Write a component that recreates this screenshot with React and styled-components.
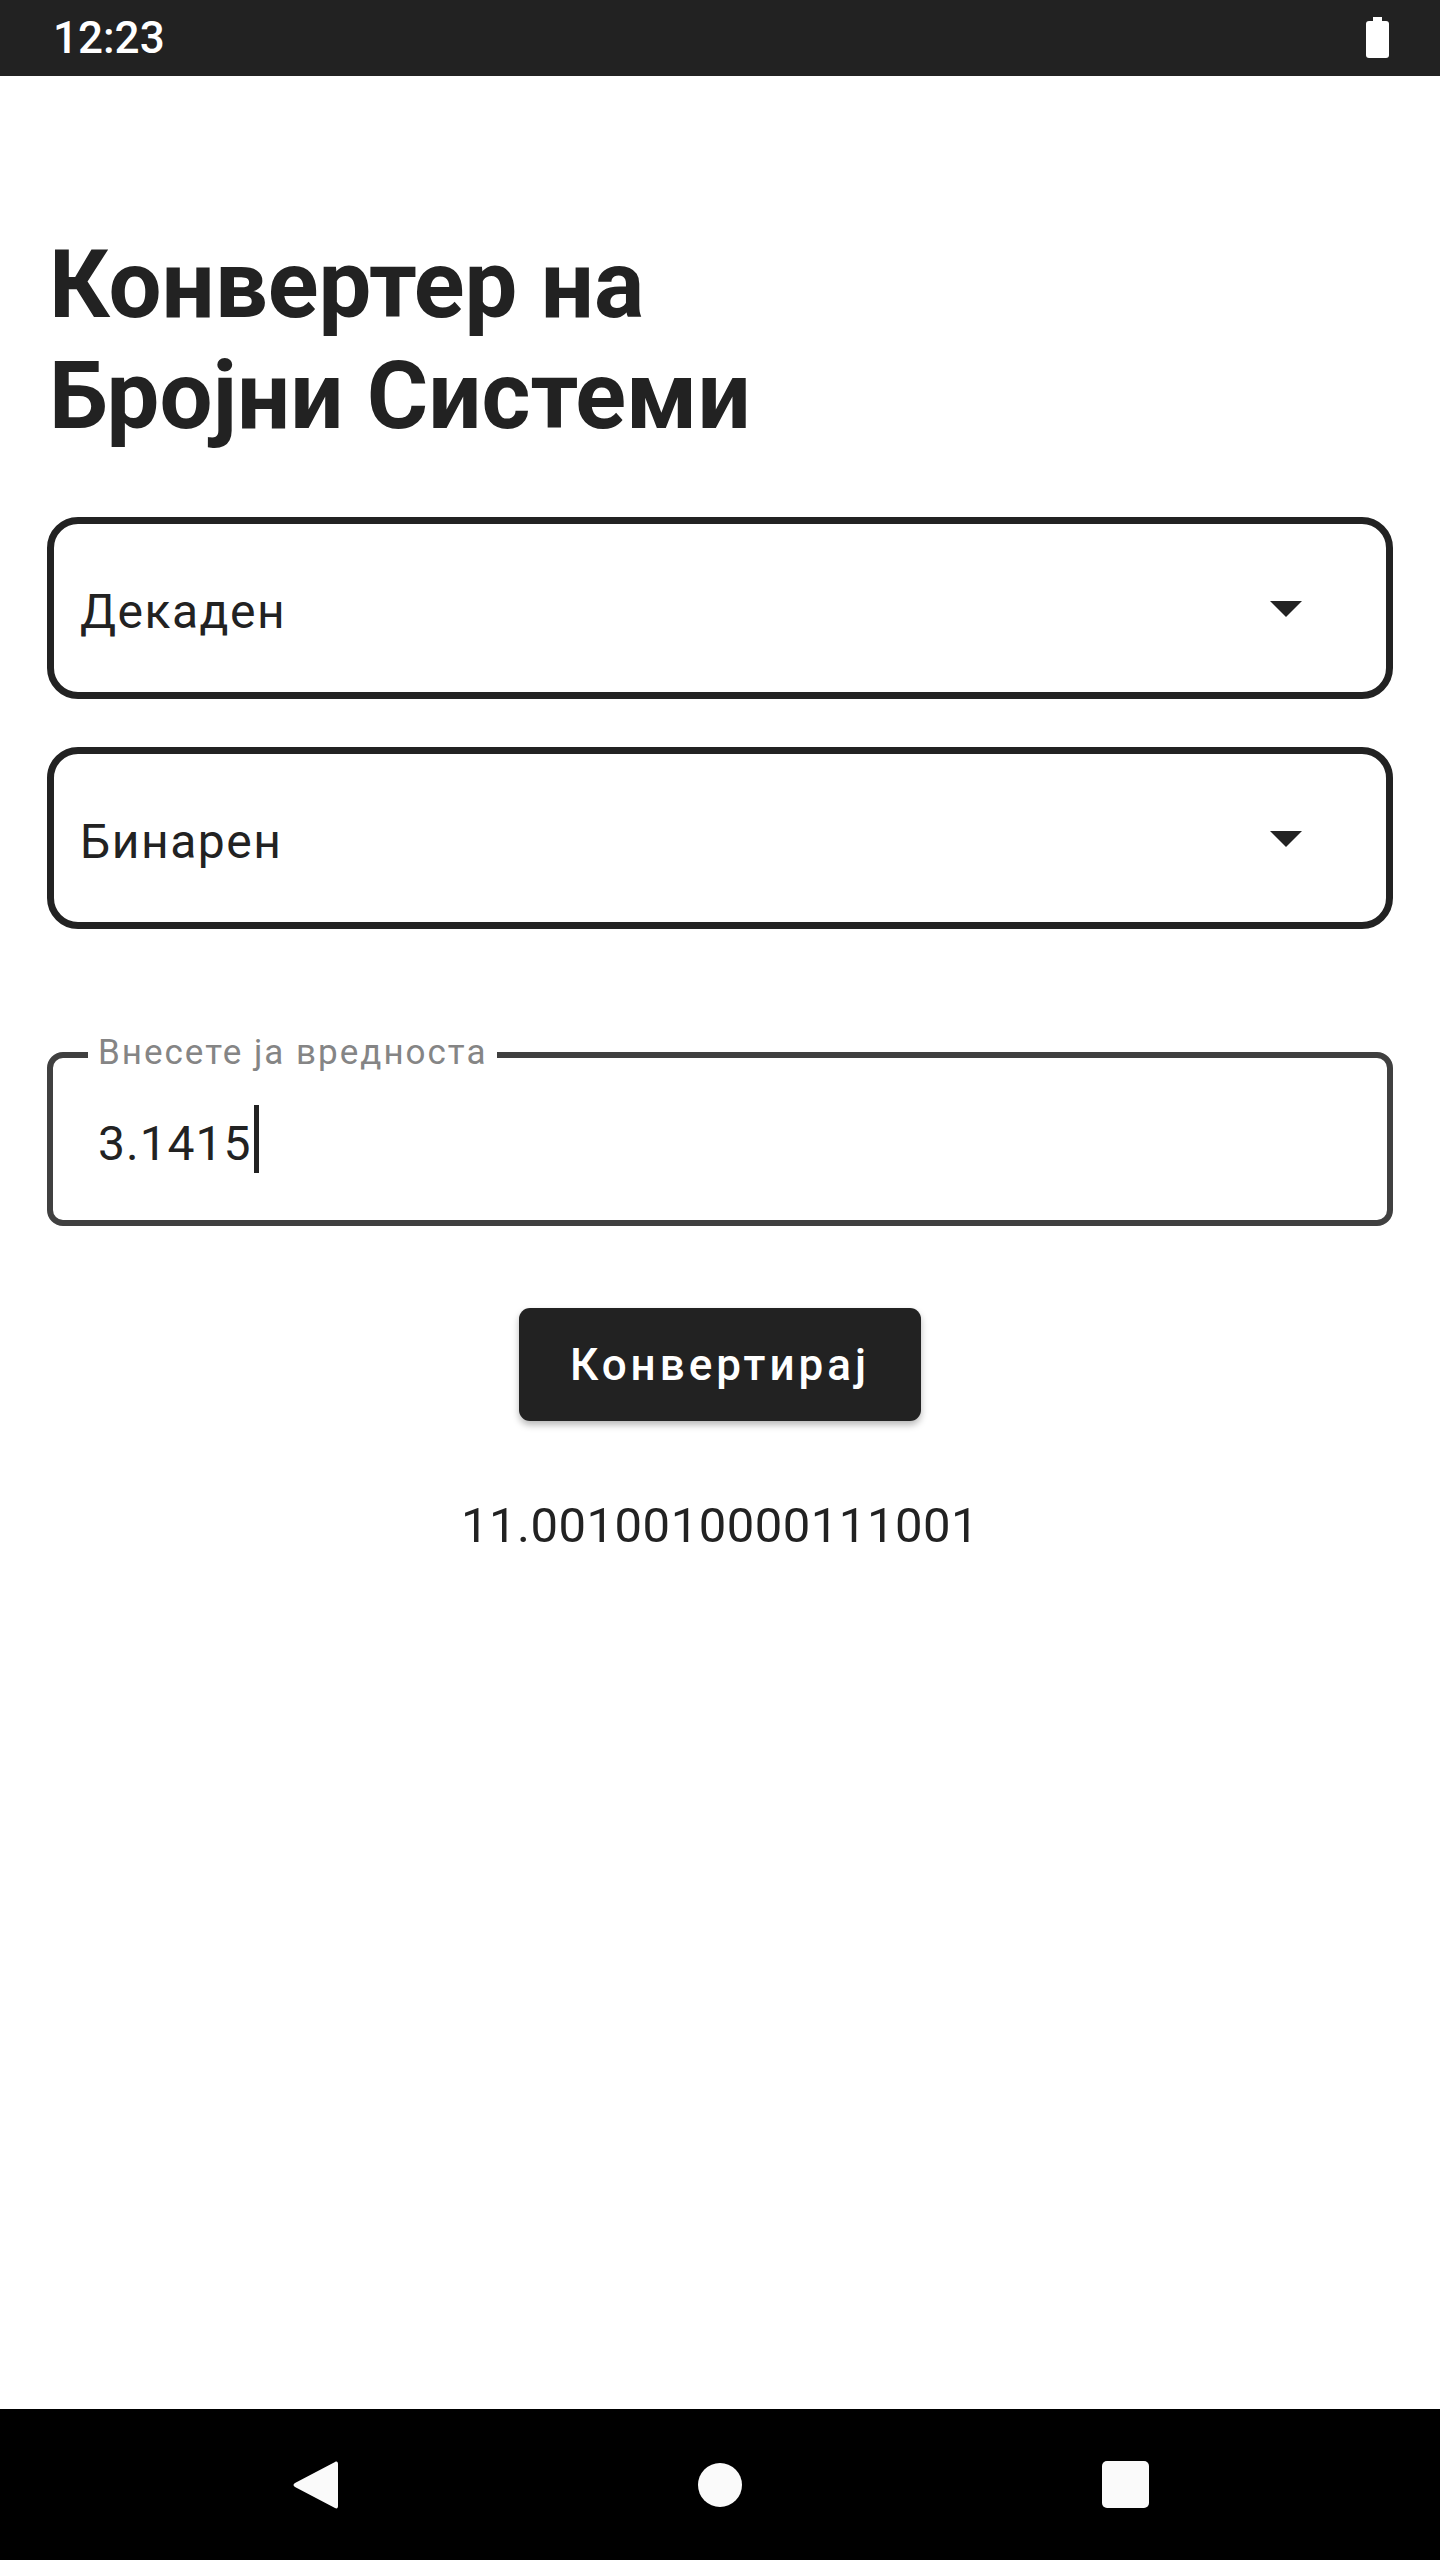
import React from 'react';
import styled, { createGlobalStyle } from 'styled-components';

const INK = '#222222';

const GlobalStyle = createGlobalStyle`
  html, body {
    margin: 0;
    padding: 0;
    background: #ffffff;
  }
  body {
    font-family: Roboto, "Noto Sans", "Liberation Sans", sans-serif;
    color: ${INK};
  }
`;

const Screen = styled.div`
  display: flex;
  flex-direction: column;
  width: 1440px;
  height: 2560px;
  background: #ffffff;
`;

const StatusBar = styled.div`
  display: flex;
  align-items: center;
  justify-content: space-between;
  height: 76px;
  padding: 0 51px 0 53px;
  background: ${INK};
  color: #ffffff;
`;

const Clock = styled.span`
  font-size: 44px;
  font-weight: 500;
  line-height: 1;
`;

const Battery = styled.div`
  position: relative;
  width: 23px;
  height: 37px;
  margin-top: 3px;
  border-radius: 3px;
  background: #ffffff;

  &::before {
    content: '';
    position: absolute;
    top: -4px;
    left: 7px;
    width: 9px;
    height: 5px;
    background: #ffffff;
  }
`;

const Main = styled.main`
  flex: 1;
  display: flex;
  flex-direction: column;
  padding: 154px 47px 0;
`;

const Title = styled.h1`
  margin: 0 0 65px 2px;
  font-size: 94px;
  font-weight: 700;
  line-height: 111px;
  color: ${INK};
`;

const Select = styled.div`
  display: flex;
  align-items: center;
  justify-content: space-between;
  box-sizing: border-box;
  height: 182px;
  padding: 8px 84px 0 26px;
  margin-bottom: ${({ $gap }) => $gap}px;
  border: 7px solid ${INK};
  border-radius: 31px;
`;

const SelectText = styled.span`
  font-size: 48px;
  line-height: 56px;
  letter-spacing: 1.5px;
  color: ${INK};
`;

const Caret = styled.span`
  width: 0;
  height: 0;
  margin-top: -6px;
  border-left: 16px solid transparent;
  border-right: 16px solid transparent;
  border-top: 16px solid ${INK};
`;

const Field = styled.div`
  position: relative;
  box-sizing: border-box;
  height: 174px;
  padding: 57px 45px 0;
  margin-top: 123px;
  border: 6px solid #404040;
  border-radius: 16px;
`;

const FieldLabel = styled.span`
  position: absolute;
  top: -24px;
  left: 35px;
  padding: 0 10px;
  background: #ffffff;
  font-size: 35px;
  line-height: 38px;
  letter-spacing: 2px;
  color: #858585;
`;

const FieldValue = styled.div`
  display: flex;
  align-items: center;
  font-size: 48px;
  line-height: 56px;
  letter-spacing: 1px;
  color: ${INK};
`;

const Cursor = styled.span`
  width: 5px;
  height: 68px;
  margin: -10px 0 0 2px;
  background: ${INK};
`;

const ConvertButton = styled.button`
  align-self: center;
  width: 402px;
  height: 113px;
  margin-top: 82px;
  padding: 0;
  border: none;
  border-radius: 11px;
  background: ${INK};
  color: #ffffff;
  font-family: Roboto, "Noto Sans", sans-serif;
  font-size: 44px;
  font-weight: 500;
  letter-spacing: 4px;
  box-shadow: 0 4px 7px rgba(0, 0, 0, 0.28);
`;

const Result = styled.div`
  margin-top: 77px;
  text-align: center;
  font-size: 49px;
  line-height: 56px;
  letter-spacing: 0.5px;
  color: ${INK};
`;

const NavBar = styled.nav`
  display: flex;
  align-items: center;
  justify-content: center;
  gap: 305px;
  height: 151px;
  background: #000000;
`;

const NavSlot = styled.div`
  display: flex;
  align-items: center;
  justify-content: center;
  width: 100px;
  height: 60px;
`;

const HomeDot = styled.div`
  width: 44px;
  height: 44px;
  border-radius: 50%;
  background: #fafafa;
`;

const RecentsSquare = styled.div`
  width: 47px;
  height: 47px;
  border-radius: 5px;
  background: #fafafa;
`;

const BackIcon = () => (
  <svg width="48" height="52" viewBox="0 0 48 52">
    <path
      d="M44 3 C46 2 47 3 47 5 L47 47 C47 49 46 50 44 49 L4 28 C2 27 2 25 4 24 Z"
      fill="#fafafa"
    />
  </svg>
);

export default function App() {
  return (
    <Screen>
      <GlobalStyle />
      <StatusBar>
        <Clock>12:23</Clock>
        <Battery />
      </StatusBar>

      <Main>
        <Title>
          Конвертер на
          <br />
          Бројни Системи
        </Title>

        <Select $gap={48}>
          <SelectText>Декаден</SelectText>
          <Caret />
        </Select>
        <Select $gap={0}>
          <SelectText>Бинарен</SelectText>
          <Caret />
        </Select>

        <Field>
          <FieldLabel>Внесете ја вредноста</FieldLabel>
          <FieldValue>
            3.1415
            <Cursor />
          </FieldValue>
        </Field>

        <ConvertButton>Конвертирај</ConvertButton>

        <Result>11.0010010000111001</Result>
      </Main>

      <NavBar>
        <NavSlot>
          <BackIcon />
        </NavSlot>
        <NavSlot>
          <HomeDot />
        </NavSlot>
        <NavSlot>
          <RecentsSquare />
        </NavSlot>
      </NavBar>
    </Screen>
  );
}
